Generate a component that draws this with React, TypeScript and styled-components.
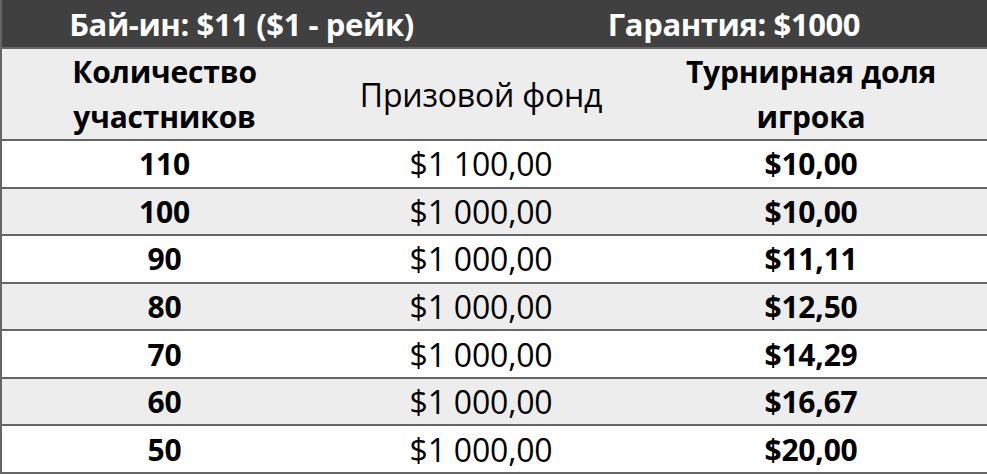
import React from "react";
import styled, { createGlobalStyle } from "styled-components";

const GlobalStyle = createGlobalStyle`
  html, body {
    margin: 0;
    padding: 0;
    background: #fff;
  }
  body {
    font-family: "Open Sans", "Noto Sans", sans-serif;
    color: #000;
  }
`;

const Table = styled.table`
  width: 987px;
  height: 474px;
  border-collapse: collapse;
  table-layout: fixed;
  border: 2px solid #666;
  border-top: none;
`;

const TitleRow = styled.tr`
  background: #404040;
  height: 48px;
`;

const TitleCell = styled.th`
  color: #fff;
  font-size: 31px;
  font-weight: 700;
  text-align: center;
  padding: 0;
  border-bottom: 2px solid #666;
  letter-spacing: -0.4px;
`;

const HeadRow = styled.tr`
  background: #ededed;
  height: 91px;
`;

const HeadCell = styled.th<{ $bold?: boolean }>`
  font-size: ${(p) => (p.$bold ? 30 : 32)}px;
  font-weight: ${(p) => (p.$bold ? 700 : 400)};
  line-height: 45px;
  text-align: center;
  padding: 0;
  border-bottom: 2px solid #666;
  letter-spacing: -0.2px;
`;

const Row = styled.tr<{ $shaded: boolean }>`
  background: ${(p) => (p.$shaded ? "#ededed" : "#fff")};
  height: 47px;
`;

const Cell = styled.td<{ $bold?: boolean }>`
  font-size: ${(p) => (p.$bold ? 30 : 32)}px;
  font-weight: ${(p) => (p.$bold ? 700 : 400)};
  text-align: center;
  padding: 0;
  border-bottom: 2px solid #666;
  letter-spacing: -0.2px;
`;

const rows = [
  { players: "110", pool: "$1 100,00", share: "$10,00" },
  { players: "100", pool: "$1 000,00", share: "$10,00" },
  { players: "90", pool: "$1 000,00", share: "$11,11" },
  { players: "80", pool: "$1 000,00", share: "$12,50" },
  { players: "70", pool: "$1 000,00", share: "$14,29" },
  { players: "60", pool: "$1 000,00", share: "$16,67" },
  { players: "50", pool: "$1 000,00", share: "$20,00" },
];

const App: React.FC = () => {
  return (
    <>
      <GlobalStyle />
      <Table>
        <colgroup>
          <col style={{ width: 326 }} />
          <col style={{ width: 154 }} />
          <col style={{ width: 154 }} />
          <col style={{ width: 353 }} />
        </colgroup>
        <thead>
          <TitleRow>
            <TitleCell colSpan={2}>Бай-ин: $11 ($1 - рейк)</TitleCell>
            <TitleCell colSpan={2}>Гарантия: $1000</TitleCell>
          </TitleRow>
          <HeadRow>
            <HeadCell $bold>
              Количество
              <br />
              участников
            </HeadCell>
            <HeadCell colSpan={2}>Призовой фонд</HeadCell>
            <HeadCell $bold>
              Турнирная доля
              <br />
              игрока
            </HeadCell>
          </HeadRow>
        </thead>
        <tbody>
          {rows.map((r, i) => (
            <Row key={i} $shaded={i % 2 === 1}>
              <Cell $bold>{r.players}</Cell>
              <Cell colSpan={2}>{r.pool}</Cell>
              <Cell $bold>{r.share}</Cell>
            </Row>
          ))}
        </tbody>
      </Table>
    </>
  );
};

export default App;
